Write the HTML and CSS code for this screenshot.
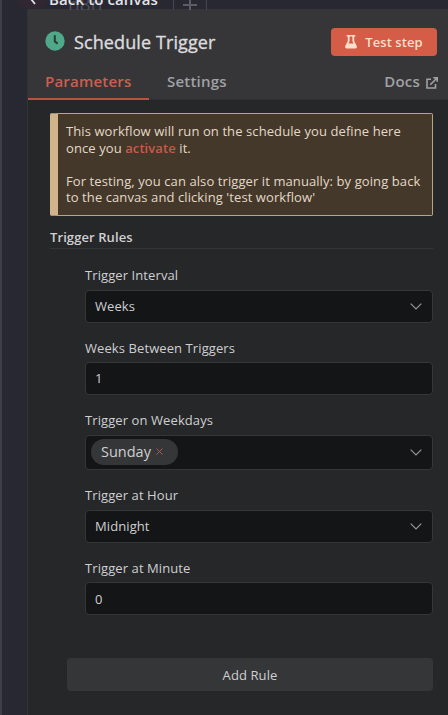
FILE: index.html
```html
<!DOCTYPE html>
<html lang="en">
<head>
<meta charset="utf-8">
<title>Schedule Trigger</title>
<link rel="stylesheet" href="styles.css">
</head>
<body>
<div class="backdrop">
  <div class="canvas-bar">
    <span class="brand-mark"></span>
    <span class="brand">n8n</span>
    <span class="add-tab"><svg width="14" height="14" viewBox="0 0 14 14"><path d="M7 0v14M0 7h14"/></svg></span>
  </div>
  <a class="back"><svg width="6" height="12" viewBox="0 0 6 12"><path d="M5 1L1 6l4 5"/></svg><span>Back to canvas</span></a>
</div>
<main class="panel">
  <header class="header">
    <div class="title-row">
      <svg class="clock" width="20" height="20" viewBox="0 0 20 20"><circle cx="10" cy="10" r="9.7"/><path d="M9.8 4.2v6.2l2.9 2.2"/></svg>
      <h1 class="title"><span>Schedule Trigger</span></h1>
      <button class="test-step">
        <svg width="12" height="14" viewBox="0 0 12 14"><path fill-rule="evenodd" d="M1.700 0h8.600v1.600H9.200v4.300l2.500 5.200c.6 1.300 0 2.400-1.400 2.400H1.700C.3 13.500-.3 12.400.3 11.100L2.800 5.900V1.600H1.700zM4.600 1.600v4.700L3.400 8.600h5.200L7.400 6.300V1.600z"/></svg>
        <span>Test step</span>
      </button>
    </div>
    <nav class="tabs">
      <a class="tab active"><span>Parameters</span></a>
      <a class="tab"><span>Settings</span></a>
      <a class="tab docs"><span>Docs</span>
        <svg width="12" height="12" viewBox="0 0 12 12"><path d="M5 2.200H1V11h8.500V7M7.200.8h4v4M11 1L4.300 7.700"/></svg>
      </a>
    </nav>
  </header>
  <section class="content">
    <div class="notice">
      <p>This workflow will run on the schedule you define here<br>once you <a>activate</a> it.</p>
      <p>For testing, you can also trigger it manually: by going back<br>to the canvas and clicking 'test workflow'</p>
    </div>
    <h2 class="section-title">Trigger Rules</h2>
    <div class="fields">
      <label>Trigger Interval</label>
      <div class="input"><span>Weeks</span><svg class="chev" width="12" height="7" viewBox="0 0 12 7"><path d="M.7.700L6 6 11.300.7"/></svg></div>
      <label>Weeks Between Triggers</label>
      <div class="input"><span>1</span></div>
      <label>Trigger on Weekdays</label>
      <div class="input multi"><span class="tag">Sunday<svg width="7" height="7" viewBox="0 0 7 7"><path d="M.5.500l6 6M6.500.500l-6 6"/></svg></span><svg class="chev" width="12" height="7" viewBox="0 0 12 7"><path d="M.7.700L6 6 11.300.7"/></svg></div>
      <label>Trigger at Hour</label>
      <div class="input"><span>Midnight</span><svg class="chev" width="12" height="7" viewBox="0 0 12 7"><path d="M.7.700L6 6 11.300.7"/></svg></div>
      <label>Trigger at Minute</label>
      <div class="input"><span>0</span></div>
    </div>
    <button class="add-rule">Add Rule</button>
  </section>
</main>
</body>
</html>
```
FILE: styles.css
```css
* { box-sizing: border-box; }
body {
  margin: 0;
  width: 448px;
  height: 715px;
  overflow: hidden;
  position: relative;
  background: #282833;
  border-left: 2px solid #3d3e48;
  color: #cfcfd1;
  font: 13px/16.5px "Open Sans", "Noto Sans", sans-serif;
  letter-spacing: .09px;
}
svg { flex: none; fill: none; stroke: currentColor; }
h1, h2, p { margin: 0; }
button { border: 0; font: inherit; letter-spacing: inherit; color: inherit; padding: 0; }

.backdrop { height: 9px; }
.canvas-bar { position: absolute; left: 0; top: 0; height: 10px; width: 446px; overflow: hidden; }
.brand-mark { position: absolute; left: 16px; top: 0; width: 28px; height: 8px; border-radius: 0 0 5px 5px; background: #38263280; }
.brand { position: absolute; left: 66px; top: -6px; font-size: 19px; line-height: 20px; color: #50505a; }
.add-tab { position: absolute; left: 171px; top: -12px; width: 34px; height: 30px; border: 1px solid #45454f; color: #5c5c66; }
.add-tab svg { position: absolute; left: 9px; top: 9px; stroke-width: 2; }
.back {
  position: absolute; left: 28px; top: -9px;
  display: flex; align-items: center; gap: 13px;
  color: #e4e4e8; font-size: 15px; line-height: 16px; font-weight: 600; letter-spacing: .12px;
}
.back svg { stroke-width: 1.8; }

.panel {
  margin-left: 25px;
  height: 706px;
  background: #262729;
  border-left: 1px solid #323239;
}
.header { height: 91px; background: #363638; border-bottom: 1px solid #303033; }
.title-row { display: flex; align-items: center; height: 57px; padding: 9px 11px 0 17px; }
.clock { fill: #4fa989; stroke: none; position: relative; top: -1.5px; }
.clock path { fill: none; stroke: #2c3a36; stroke-width: 2; }
.title { flex: 1; margin-left: 9px; font-size: 18px; line-height: 24px; font-weight: 500; letter-spacing: .1px; color: #dcdcde; -webkit-text-stroke: .35px; }
.test-step {
  display: flex; align-items: center; justify-content: center; gap: 8px;
  width: 106px; height: 28px; border-radius: 4px;
  background: #d55c47; color: #fbdfcb;
  font-size: 13px; font-weight: 600;
}
.test-step svg { fill: currentColor; stroke: none; }
.tabs { display: flex; height: 34px; padding-right: 10px; font-size: 15px; line-height: 31px; font-weight: 600; letter-spacing: .2px; color: #a0a1a5; }
.tab { display: block; height: 31px; margin-left: 18px; }
.tab.active { width: 121px; height: 34px; margin-left: 0; padding-left: 17px; color: #c9604f; border-bottom: 2px solid #b65442; }
.docs { display: flex; align-items: center; gap: 6px; margin-left: auto; }
.docs svg { stroke-width: 1.6; margin-top: 2px; }

.content { padding: 13px 15px 0 22px; }
.notice {
  height: 103px; padding: 9px 0 0 8px;
  border: 1px solid #b9a585; border-left: 8px solid #d2b48c; border-radius: 2px;
  background: #44382a; color: #e3d8c7;
  white-space: nowrap;
}
.notice p + p { margin-top: 16.5px; }
.notice a { color: #c65b4b; font-weight: 600; }
.section-title { height: 33px; padding-top: 11px; border-bottom: 1px solid #343538; font-size: 13px; line-height: 20px; font-weight: 600; color: #d0d0d2; }
.fields { display: flex; flex-direction: column; padding-left: 35px; margin-top: 16px; }
.fields label { height: 24.500px; line-height: 20px; }
.input {
  display: flex; align-items: center; justify-content: space-between;
  height: 33px; margin-bottom: 15.200px; padding: 0 10px 0 9px;
  background: #141517; border: 1px solid #353639; border-radius: 4px;
}
.chev { color: #96979b; stroke-width: 1.200; }
.multi { height: 35px; padding-left: 5px; }
.tag {
  display: flex; align-items: center; gap: 5px;
  height: 26px; padding: 0 15px 0 10px; border-radius: 13px;
  background: #353638; font-size: 14.500px; letter-spacing: 0;
}
.tag svg { color: #a85a5c; margin-top: -2px; }
.add-rule {
  display: block; width: 366px; height: 33px; margin: 28px 0 0 17px;
  border-radius: 4px; background: #353638; color: #cfcfd1;
}
```
